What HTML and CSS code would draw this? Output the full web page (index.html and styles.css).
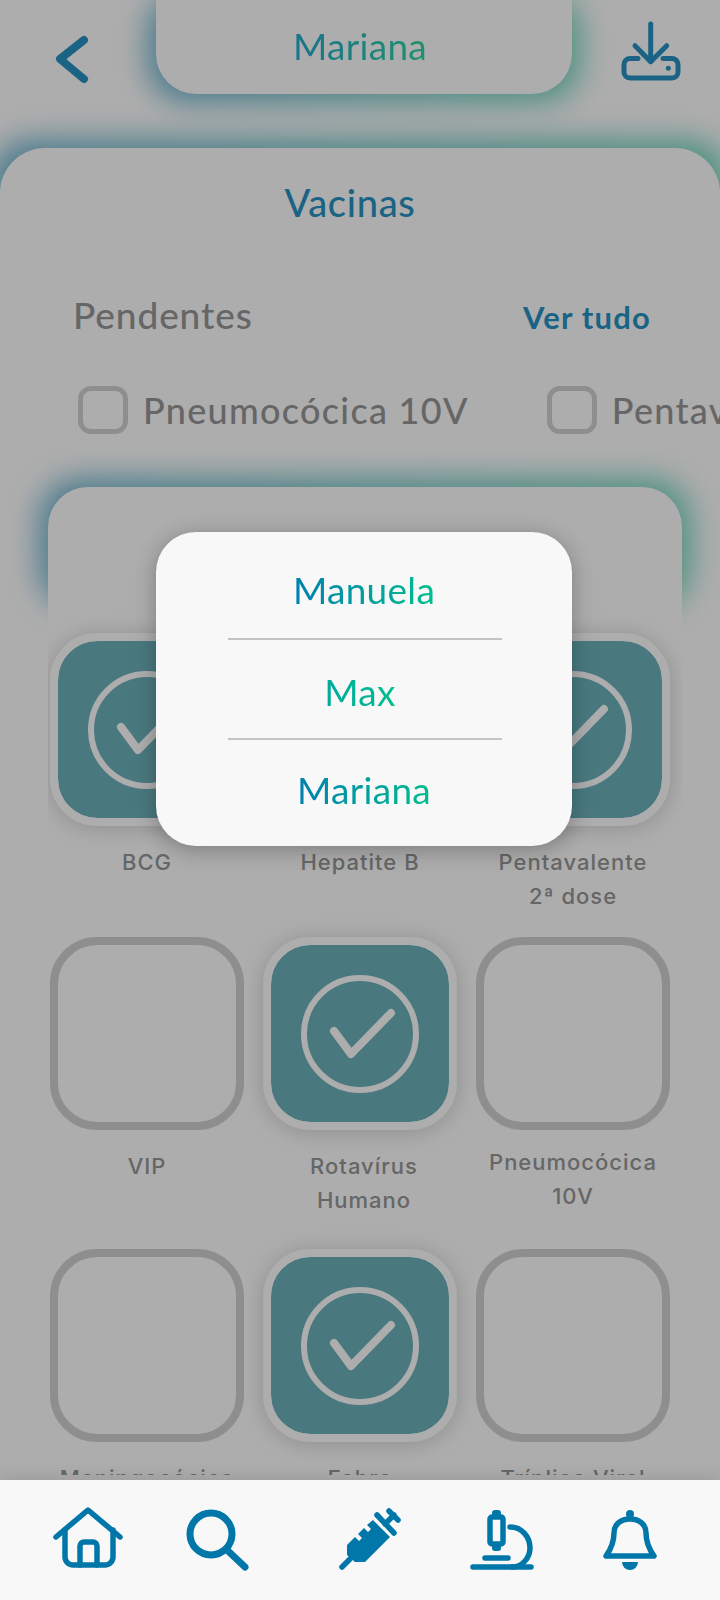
FILE: index.html
```html
<!DOCTYPE html>
<html lang="pt-BR">
<head>
    <meta charset="UTF-8">
    <title>Vacinas</title>
    <link rel="stylesheet" href="styles.css">
</head>
<body>
<div class="screen">
    <header class="top">
        <svg class="back" viewBox="0 0 48 64" width="48" height="64"><path d="M36 12 L12 31 L36 51"/></svg>
        <div class="pill-shell glow">
            <div class="pill"><span class="grad-dim">Mariana</span></div>
        </div>
        <svg class="download" viewBox="0 0 70 70" width="70" height="70">
            <path d="M34.7 8 V45.7 M19 29.7 L34.7 45.7 L50.7 29.7"/>
            <path d="M22 42.5 H14 a6 6 0 0 0 -6 6 V56 a6 6 0 0 0 6 6 H56 a6 6 0 0 0 6 -6 V48.5 a6 6 0 0 0 -6 -6 H47"/>
            <circle cx="52.3" cy="52.3" r="2.5"/>
        </svg>
    </header>

    <div class="card-shell glow">
        <main class="card">
            <h1 class="title">Vacinas</h1>
            <div class="section-head">
                <h2>Pendentes</h2>
                <a class="see-all">Ver tudo</a>
            </div>
            <div class="pending">
                <div class="pending-item"><span class="box"></span>Pneumocócica 10V</div>
                <div class="pending-item"><span class="box"></span>Pentavalente</div>
            </div>

            <div class="panel-shell glow">
                <section class="panel">
                    <div class="vaccines">
                        <div class="vaccine">
                            <div class="tile done"><svg viewBox="0 0 118 118" width="118" height="118"><circle cx="59" cy="59" r="56"/><path d="M33 56 L50 79 L90 38"/></svg></div>
                            <p>BCG</p>
                        </div>
                        <div class="vaccine">
                            <div class="tile done"><svg viewBox="0 0 118 118" width="118" height="118"><circle cx="59" cy="59" r="56"/><path d="M33 56 L50 79 L90 38"/></svg></div>
                            <p>Hepatite B</p>
                        </div>
                        <div class="vaccine">
                            <div class="tile done"><svg viewBox="0 0 118 118" width="118" height="118"><circle cx="59" cy="59" r="56"/><path d="M33 56 L50 79 L90 38"/></svg></div>
                            <p>Pentavalente<br>2ª dose</p>
                        </div>

                        <div class="vaccine tall">
                            <div class="tile"></div>
                            <p>VIP</p>
                        </div>
                        <div class="vaccine tall">
                            <div class="tile done"><svg viewBox="0 0 118 118" width="118" height="118"><circle cx="59" cy="59" r="56"/><path d="M33 56 L50 79 L90 38"/></svg></div>
                            <p class="nudge-right">Rotavírus<br>Humano</p>
                        </div>
                        <div class="vaccine tall">
                            <div class="tile"></div>
                            <p class="nudge-up">Pneumocócica<br>10V</p>
                        </div>

                        <div class="vaccine">
                            <div class="tile"></div>
                            <p>Meningocócica</p>
                        </div>
                        <div class="vaccine">
                            <div class="tile done"><svg viewBox="0 0 118 118" width="118" height="118"><circle cx="59" cy="59" r="56"/><path d="M33 56 L50 79 L90 38"/></svg></div>
                            <p>Febre</p>
                        </div>
                        <div class="vaccine">
                            <div class="tile"></div>
                            <p>Tríplice Viral</p>
                        </div>
                    </div>
                </section>
            </div>
        </main>
    </div>

    <div class="overlay"></div>

    <div class="picker">
        <div class="picker-item first"><span class="grad">Manuela</span></div>
        <hr>
        <div class="picker-item middle"><span class="grad green">Max</span></div>
        <hr>
        <div class="picker-item last"><span class="grad">Mariana</span></div>
    </div>

    <nav class="tabbar">
        <svg viewBox="0 0 76 80" width="76" height="80">
            <path d="M6 37 L38 10 L70 37"/>
            <path d="M15 30 V57 a8 8 0 0 0 8 8 H55 a8 8 0 0 0 8 -8 V30"/>
            <path d="M30 65 V46 a4 4 0 0 1 4 -4 H43 a4 4 0 0 1 4 4 V65"/>
        </svg>
        <svg class="thick" viewBox="0 0 76 80" width="76" height="80">
            <circle cx="29" cy="34" r="21"/>
            <path d="M45 50 L63 67"/>
        </svg>
        <svg viewBox="0 0 76 80" width="76" height="80">
            <path class="solid" d="M15 45 L23 37 L27 41 L30 38 L26 34 L32 28 L36 32 L39 29 L35 25 L41 20 L58 37 L33 62 L23 62 L15 55 Z"/>
            <path d="M10 67 L18 59"/>
            <path d="M45 15 L62 33 M53 24 L62 15 M57 11 L66 20"/>
        </svg>
        <svg viewBox="0 0 76 80" width="76" height="80">
            <rect x="24" y="17" width="13" height="27" rx="2"/>
            <rect class="solid" x="26" y="10" width="9" height="6" rx="3"/>
            <rect class="solid" x="26" y="45" width="9" height="6" rx="3"/>
            <path d="M44 27 C56 27 64 37 64 48 C64 58 56 67 46 67"/>
            <path d="M7 67 H65 M19 58 H42"/>
        </svg>
        <svg viewBox="0 0 76 80" width="76" height="80">
            <circle class="solid" cx="36" cy="14" r="4"/>
            <path d="M12 56 C17 49 20 40 20 33 C20 24 27 19 36 19 C45 19 52 24 52 33 C52 40 55 49 60 56 Z"/>
            <path class="solid" d="M28 62 H44 A8 8 0 0 1 28 62 Z"/>
        </svg>
    </nav>
</div>
</body>
</html>
```

FILE: styles.css
```css
html, body {
    margin: 0;
    padding: 0;
    background-color: #f8f8f8;
}
.screen {
    position: relative;
    width: 720px;
    height: 1600px;
    overflow: hidden;
    background-color: #f8f8f8;
    font-family: Lato, "Open Sans", sans-serif;
}

/* the coloured halo round each white block */
.glow {
    position: relative;
}
.glow::before {
    content: "";
    position: absolute;
    top: -8px;
    left: -8px;
    right: -8px;
    bottom: -8px;
    background-image: linear-gradient(90deg, #0f7fae, #19b98f);
    filter: blur(15px);
    opacity: 0.62;
    border-radius: 40px;
}

/* header */
.top {
    display: grid;
    grid-template-columns: 156px 416px 148px;
    height: 94px;
}
.top svg {
    fill: none;
    stroke: #288fbd;
    stroke-linecap: round;
    stroke-linejoin: round;
}
.back {
    margin: 28px 0 0 48px;
    stroke-width: 8;
}
.download {
    margin: 16px 0 0 44px;
    stroke-width: 5;
}
.download circle {
    fill: #288fbd;
    stroke: none;
}
.pill {
    position: relative;
    display: flex;
    align-items: center;
    justify-content: center;
    box-sizing: border-box;
    height: 94px;
    padding: 0 8px 4px 0;
    background-color: #f8f8f8;
    border-radius: 0 0 40px 40px;
}
.grad, .grad-dim {
    display: inline-block;
    font-size: 37px;
    letter-spacing: 0.3px;
    color: transparent;
    -webkit-background-clip: text;
    background-clip: text;
}
.grad {
    background-image: linear-gradient(90deg, #0080ae, #00bd8e);
}
.grad.green {
    background-image: linear-gradient(90deg, #00aa9c, #00bd8e);
}
.grad-dim {
    background-image: linear-gradient(90deg, #26a6c8, #2ecf9e);
}

/* main card */
.card-shell {
    margin-top: 54px;
    height: 1328px;
}
.card-shell::before {
    bottom: auto;
    height: 300px;
}
.card {
    position: relative;
    height: 1328px;
    background-color: #f8f8f8;
    border-radius: 45px 45px 0 0;
}
.title {
    margin: 0;
    padding-top: 32px;
    padding-right: 20px;
    font-size: 38px;
    line-height: 44px;
    letter-spacing: 0.7px;
    font-weight: 500;
    text-align: center;
    color: #288fbd;
}
.section-head {
    display: flex;
    justify-content: space-between;
    align-items: baseline;
    padding: 69px 69px 0 73px;
}
.section-head h2 {
    margin: 0;
    font-size: 37px;
    line-height: 44px;
    letter-spacing: 0.9px;
    font-weight: 500;
    color: #929292;
}
.see-all {
    font-size: 31px;
    letter-spacing: 1.2px;
    font-weight: 700;
    color: #288fbd;
}
.pending {
    display: flex;
    gap: 78px;
    padding: 49px 0 0 78px;
    white-space: nowrap;
    overflow: hidden;
}
.pending-item {
    display: flex;
    align-items: center;
    gap: 15px;
    flex-shrink: 0;
    font-size: 36px;
    letter-spacing: 1.3px;
    font-weight: 500;
    color: #929292;
}
.box {
    display: block;
    box-sizing: border-box;
    width: 50px;
    height: 48px;
    border: 5px solid #ccc;
    border-radius: 13px;
}

/* vaccines */
.panel-shell {
    margin: 53px 38px 0 48px;
}
.panel-shell::before {
    bottom: auto;
    height: 130px;
}
.panel {
    position: relative;
    height: 988px;
    background-color: #f8f8f8;
    border-radius: 40px 40px 0 0;
}
.vaccines {
    display: grid;
    grid-template-columns: 194px 194px 194px;
    column-gap: 19px;
    box-sizing: border-box;
    height: 988px;
    padding: 146px 0 0 2px;
    overflow: hidden;
}
.vaccine {
    display: flex;
    flex-direction: column;
    align-items: center;
    height: 304px;
}
.vaccine.tall {
    height: 312px;
}
.vaccine p {
    margin: 19px 0 0;
    font-family: Inter, "Noto Sans", sans-serif;
    font-size: 22px;
    line-height: 34px;
    letter-spacing: 1px;
    font-weight: 500;
    white-space: nowrap;
    text-align: center;
    color: #929292;
}
p.nudge-right {
    padding-left: 8px;
}
p.nudge-up {
    margin-top: 15px;
}
.tile {
    display: flex;
    align-items: center;
    justify-content: center;
    box-sizing: border-box;
    width: 194px;
    height: 193px;
    flex-shrink: 0;
    border: 8px solid #ccc;
    border-radius: 47px;
}
.tile.done {
    background-color: #69aeb7;
    background-clip: padding-box;
    border-color: #f8f8f8;
    box-shadow: 0 2px 22px rgba(0, 0, 0, 0.18);
}
.tile svg {
    overflow: visible;
    fill: none;
    stroke: #f8f8f8;
    stroke-width: 6;
    stroke-linecap: round;
    stroke-linejoin: round;
}
.tile svg path {
    stroke-width: 8;
}

/* dim layer and picker */
.overlay {
    position: absolute;
    top: 0;
    left: 0;
    right: 0;
    bottom: 120px;
    background-color: rgba(0, 0, 0, 0.3);
}
.picker {
    position: absolute;
    top: 532px;
    left: 156px;
    width: 416px;
    height: 314px;
    background-color: #f8f8f8;
    border-radius: 40px;
    box-shadow: 0 4px 22px rgba(0, 0, 0, 0.28);
}
.picker hr {
    margin: 0 70px 0 72px;
    border: 0;
    height: 2px;
    background-color: #c4c4c4;
}
.picker-item {
    display: flex;
    align-items: center;
    justify-content: center;
    box-sizing: border-box;
}
.picker-item.first {
    height: 106px;
    padding-top: 8px;
}
.picker-item.middle {
    height: 98px;
    padding: 4px 8px 0 0;
}
.picker-item.last {
    height: 91px;
    padding-top: 8px;
}

/* bottom bar */
.tabbar {
    position: absolute;
    left: 0;
    right: 0;
    bottom: 0;
    height: 120px;
    box-sizing: border-box;
    display: grid;
    grid-template-columns: 132px 150px 134px 128px 76px;
    padding: 20px 0 0 50px;
    background-color: #f8f8f8;
    box-shadow: 0 -6px 12px rgba(0, 0, 0, 0.08);
}
.tabbar svg {
    fill: none;
    stroke: #0077a8;
    stroke-width: 5.5;
    stroke-linecap: round;
    stroke-linejoin: round;
}
.tabbar svg.thick {
    stroke-width: 7;
}
.tabbar .solid {
    fill: #0077a8;
    stroke: none;
}
```
